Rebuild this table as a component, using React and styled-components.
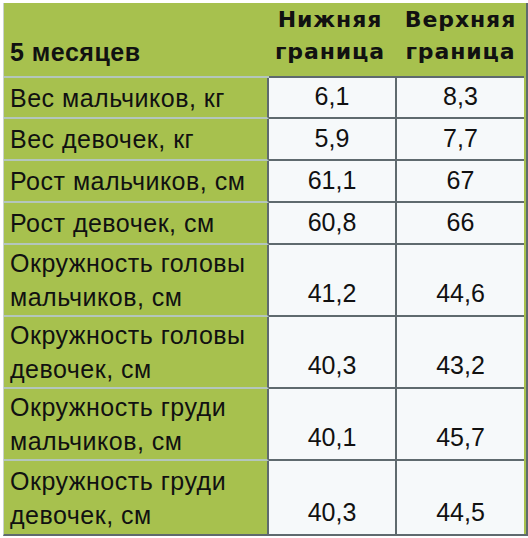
import React from "react";
import styled, { createGlobalStyle } from "styled-components";

const Global = createGlobalStyle`
  html, body { margin: 0; padding: 0; background: #ffffff; }
  body { font-family: "Liberation Sans", Arial, sans-serif; }
`;

const GREEN = "#a7c14e";
const LINE = "#5f6a6e";
const SOFT = "#b4c6bd";

const Page = styled.div`
  padding: 3px 0 0 3px;
  width: 528px;
  height: 538px;
  box-sizing: border-box;
`;

const Grid = styled.div`
  display: grid;
  grid-template-columns: 265px 128px 127px;
  grid-template-rows: 75px 41px 42px 42px 42px 72px 72px 72px 73px;
  width: 522px;
  border-left: 1px solid #c9d2cc;
  border-bottom: 2px solid ${LINE};
  border-right: 2px solid ${LINE};
  background: ${GREEN};
`;

const Corner = styled.div`
  background: ${GREEN};
  display: flex;
  align-items: flex-end;
  padding: 0 0 9px 6px;
  font-weight: bold;
  font-size: 25px;
  letter-spacing: 0.5px;
  color: #111;
  border-bottom: 2px solid ${SOFT};
`;

const HeadCell = styled.div`
  background: ${GREEN};
  display: flex;
  align-items: center;
  justify-content: center;
  text-align: center;
  font-family: "DejaVu Sans", Verdana, sans-serif;
  font-weight: bold;
  font-size: 22px;
  line-height: 32px;
  letter-spacing: 0.9px;
  color: #111;
  padding: 0 ${(p) => (p.$shift ? "6px" : "0")} 8px 0;
  border-bottom: 2px solid ${LINE};
`;

const Label = styled.div`
  background: ${GREEN};
  display: flex;
  align-items: center;
  padding-left: 6px;
  font-size: 25px;
  line-height: 34px;
  letter-spacing: 0.5px;
  color: #111;
  border-bottom: ${(p) => (p.$last ? "none" : `2px solid ${SOFT}`)};
  border-right: 2px solid ${LINE};
`;

const Value = styled.div`
  background: #f6f9fa;
  display: flex;
  justify-content: center;
  align-items: ${(p) => (p.$tall ? "flex-end" : "center")};
  padding-bottom: ${(p) => (p.$tall ? "7px" : "2px")};
  font-size: 25px;
  color: #111;
  border-bottom: ${(p) => (p.$last ? "none" : `2px solid ${LINE}`)};
  border-right: ${(p) => (p.$mid ? `2px solid ${LINE}` : "none")};
`;

const rows = [
  ["Вес мальчиков, кг", "6,1", "8,3"],
  ["Вес девочек, кг", "5,9", "7,7"],
  ["Рост мальчиков, см", "61,1", "67"],
  ["Рост девочек, см", "60,8", "66"],
  ["Окружность головы\nмальчиков, см", "41,2", "44,6"],
  ["Окружность головы\nдевочек, см", "40,3", "43,2"],
  ["Окружность груди\nмальчиков, см", "40,1", "45,7"],
  ["Окружность груди\nдевочек, см", "40,3", "44,5"],
];

export default function App() {
  return (
    <Page>
      <Global />
      <Grid>
        <Corner>5 месяцев</Corner>
        <HeadCell $shift>
          Нижняя
          <br />
          граница
        </HeadCell>
        <HeadCell>
          Верхняя
          <br />
          граница
        </HeadCell>
        {rows.map(([label, lo, hi], i) => {
          const tall = label.includes("\n");
          const last = i === rows.length - 1;
          const [l1, l2] = label.split("\n");
          return (
            <React.Fragment key={i}>
              <Label $last={last}>
                <span>
                  {l1}
                  {l2 && (
                    <>
                      <br />
                      {l2}
                    </>
                  )}
                </span>
              </Label>
              <Value $tall={tall} $last={last} $mid>
                {lo}
              </Value>
              <Value $tall={tall} $last={last}>
                {hi}
              </Value>
            </React.Fragment>
          );
        })}
      </Grid>
    </Page>
  );
}
